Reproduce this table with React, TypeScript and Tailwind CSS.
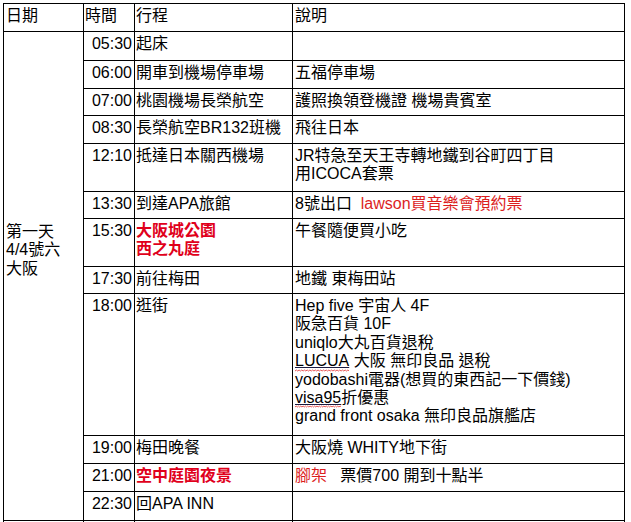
import React from "react";

type Row = { time: string; plan: React.ReactNode; note: React.ReactNode; h: string };

const RED_B = "text-[#e0001b] font-bold";
const RED = "text-[#dc1e1e]";

function Squiggle({ children }: { children: React.ReactNode }) {
  return (
    <span className="relative inline-block">
      <span className="underline decoration-solid decoration-[#1a1a40] decoration-1 underline-offset-[1px]">{children}</span>
      <svg className="absolute left-0 bottom-[-1px] w-full h-[3px]" preserveAspectRatio="none" viewBox="0 0 40 3">
        <path
          d="M0 2 L1 1 L2 2 L3 1 L4 2 L5 1 L6 2 L7 1 L8 2 L9 1 L10 2 L11 1 L12 2 L13 1 L14 2 L15 1 L16 2 L17 1 L18 2 L19 1 L20 2 L21 1 L22 2 L23 1 L24 2 L25 1 L26 2 L27 1 L28 2 L29 1 L30 2 L31 1 L32 2 L33 1 L34 2 L35 1 L36 2 L37 1 L38 2 L39 1 L40 2"
          fill="none"
          stroke="#e03030"
          strokeWidth="0.8"
          vectorEffect="non-scaling-stroke"
        />
      </svg>
    </span>
  );
}

const rows: Row[] = [
  { time: "05:30", plan: "起床", note: "", h: "h-[29px]" },
  { time: "06:00", plan: "開車到機場停車場", note: "五福停車場", h: "h-[28px]" },
  { time: "07:00", plan: "桃園機場長榮航空", note: "護照換領登機證 機場貴賓室", h: "h-[27px]" },
  { time: "08:30", plan: "長榮航空BR132班機", note: "飛往日本", h: "h-[28px]" },
  {
    time: "12:10",
    plan: "抵達日本關西機場",
    note: (
      <>
        <div>JR特急至天王寺轉地鐵到谷町四丁目</div>
        <div>用ICOCA套票</div>
      </>
    ),
    h: "h-[48px]",
  },
  {
    time: "13:30",
    plan: "到達APA旅館",
    note: (
      <>
        8號出口{"  "}
        <span className={RED}>lawson買音樂會預約票</span>
      </>
    ),
    h: "h-[27px]",
  },
  {
    time: "15:30",
    plan: (
      <span className={RED_B}>
        <div>大阪城公園</div>
        <div>西之丸庭</div>
      </span>
    ),
    note: "午餐隨便買小吃",
    h: "h-[48px]",
  },
  { time: "17:30", plan: "前往梅田", note: "地鐵 東梅田站", h: "h-[27px]" },
  {
    time: "18:00",
    plan: "逛街",
    note: (
      <>
        <div>Hep five 宇宙人 4F</div>
        <div>阪急百貨 10F</div>
        <div>uniqlo大丸百貨退稅</div>
        <div>
          <Squiggle>LUCUA</Squiggle> 大阪 無印良品 退稅
        </div>
        <div>yodobashi電器(想買的東西記一下價錢)</div>
        <div>
          <Squiggle>visa95</Squiggle>折優惠
        </div>
        <div>grand front osaka 無印良品旗艦店</div>
      </>
    ),
    h: "h-[142px]",
  },
  { time: "19:00", plan: "梅田晚餐", note: "大阪燒 WHITY地下街", h: "h-[28px]" },
  {
    time: "21:00",
    plan: <span className={RED_B}>空中庭園夜景</span>,
    note: (
      <>
        <span className={RED}>腳架</span>
        {"   "}票價700 開到十點半
      </>
    ),
    h: "h-[28px]",
  },
  { time: "22:30", plan: "回APA INN", note: "", h: "h-[29px]" },
];

export default function App() {
  const cell = "border-r border-b border-black pt-[3px] whitespace-pre";
  return (
    <div className="min-h-[522px] bg-white text-black font-['Liberation_Sans','Noto_Sans_CJK_TC',sans-serif] text-[16px] leading-[18.4px] pt-[3px] pl-[3px]">
      <div className="grid w-max grid-cols-[80px_51px_158px_332px] border-l border-t border-black">
        <div className={`${cell} h-[28px] pl-[2px]`}>日期</div>
        <div className={`${cell} pl-[1px]`}>時間</div>
        <div className={`${cell} pl-[1px]`}>行程</div>
        <div className={`${cell} pl-[2px]`}>說明</div>

        <div
          className={`${cell} col-start-1 row-start-2 row-span-12 pl-[2px] pt-[191px]`}
        >
          <div>第一天</div>
          <div>4/4號六</div>
          <div>大阪</div>
        </div>

        {rows.map((r, i) => (
          <React.Fragment key={i}>
            <div className={`${cell} ${r.h} col-start-2 text-right pr-[2px]`}>{r.time}</div>
            <div className={`${cell} pl-[1px]`}>{r.plan}</div>
            <div className={`${cell} pl-[2px]`}>{r.note}</div>
          </React.Fragment>
        ))}

        <div className={`${cell} h-[28px]`}></div>
        <div className={`${cell}`}></div>
        <div className={`${cell}`}></div>
        <div className={`${cell}`}></div>
      </div>
    </div>
  );
}
